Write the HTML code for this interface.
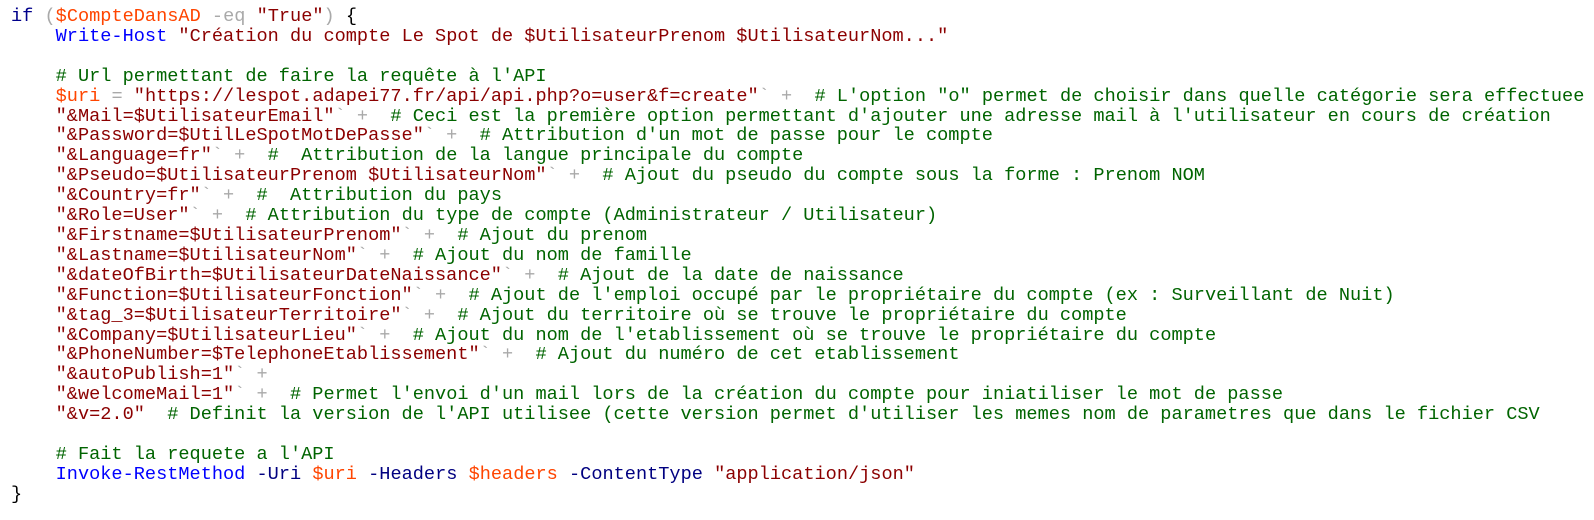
<!DOCTYPE html>
<html><head><meta charset="utf-8"><style>
html,body{margin:0;padding:0;background:#fff;width:1594px;height:520px;overflow:hidden}
pre{margin:0;position:absolute;left:11px;top:7px;font-family:"Liberation Mono","DejaVu Sans Mono",monospace;font-size:18.6px;line-height:19.9px;color:#000}
.k{color:#00008b}.v{color:#ff4500}.s{color:#8b0000}.c{color:#006400}.m{color:#0000ff}.p{color:#000080}.o{color:#a9a9a9}
</style></head><body>
<pre><span class="k">if</span> <span class="o">(</span><span class="v">$CompteDansAD</span> <span class="o">-eq</span> <span class="s">"True"</span><span class="o">)</span> {
    <span class="m">Write-Host</span> <span class="s">"Création du compte Le Spot de $UtilisateurPrenom $UtilisateurNom..."</span>

    <span class="c"># Url permettant de faire la requête à l'API</span>
    <span class="v">$uri</span> <span class="o">=</span> <span class="s">"https://lespot.adapei77.fr/api/api.php?o=user&amp;f=create"</span><span class="o">` +</span>  <span class="c"># L'option "o" permet de choisir dans quelle catégorie sera effectuee</span>
    <span class="s">"&amp;Mail=$UtilisateurEmail"</span><span class="o">` +</span>  <span class="c"># Ceci est la première option permettant d'ajouter une adresse mail à l'utilisateur en cours de création</span>
    <span class="s">"&amp;Password=$UtilLeSpotMotDePasse"</span><span class="o">` +</span>  <span class="c"># Attribution d'un mot de passe pour le compte</span>
    <span class="s">"&amp;Language=fr"</span><span class="o">` +</span>  <span class="c">#  Attribution de la langue principale du compte</span>
    <span class="s">"&amp;Pseudo=$UtilisateurPrenom $UtilisateurNom"</span><span class="o">` +</span>  <span class="c"># Ajout du pseudo du compte sous la forme : Prenom NOM</span>
    <span class="s">"&amp;Country=fr"</span><span class="o">` +</span>  <span class="c">#  Attribution du pays</span>
    <span class="s">"&amp;Role=User"</span><span class="o">` +</span>  <span class="c"># Attribution du type de compte (Administrateur / Utilisateur)</span>
    <span class="s">"&amp;Firstname=$UtilisateurPrenom"</span><span class="o">` +</span>  <span class="c"># Ajout du prenom</span>
    <span class="s">"&amp;Lastname=$UtilisateurNom"</span><span class="o">` +</span>  <span class="c"># Ajout du nom de famille</span>
    <span class="s">"&amp;dateOfBirth=$UtilisateurDateNaissance"</span><span class="o">` +</span>  <span class="c"># Ajout de la date de naissance</span>
    <span class="s">"&amp;Function=$UtilisateurFonction"</span><span class="o">` +</span>  <span class="c"># Ajout de l'emploi occupé par le propriétaire du compte (ex : Surveillant de Nuit)</span>
    <span class="s">"&amp;tag_3=$UtilisateurTerritoire"</span><span class="o">` +</span>  <span class="c"># Ajout du territoire où se trouve le propriétaire du compte</span>
    <span class="s">"&amp;Company=$UtilisateurLieu"</span><span class="o">` +</span>  <span class="c"># Ajout du nom de l'etablissement où se trouve le propriétaire du compte</span>
    <span class="s">"&amp;PhoneNumber=$TelephoneEtablissement"</span><span class="o">` +</span>  <span class="c"># Ajout du numéro de cet etablissement</span>
    <span class="s">"&amp;autoPublish=1"</span><span class="o">` +</span>
    <span class="s">"&amp;welcomeMail=1"</span><span class="o">` +</span>  <span class="c"># Permet l'envoi d'un mail lors de la création du compte pour iniatiliser le mot de passe</span>
    <span class="s">"&amp;v=2.0"</span>  <span class="c"># Definit la version de l'API utilisee (cette version permet d'utiliser les memes nom de parametres que dans le fichier CSV</span>

    <span class="c"># Fait la requete a l'API</span>
    <span class="m">Invoke-RestMethod</span> <span class="p">-Uri</span> <span class="v">$uri</span> <span class="p">-Headers</span> <span class="v">$headers</span> <span class="p">-ContentType</span> <span class="s">"application/json"</span>
}</pre>
</body></html>
